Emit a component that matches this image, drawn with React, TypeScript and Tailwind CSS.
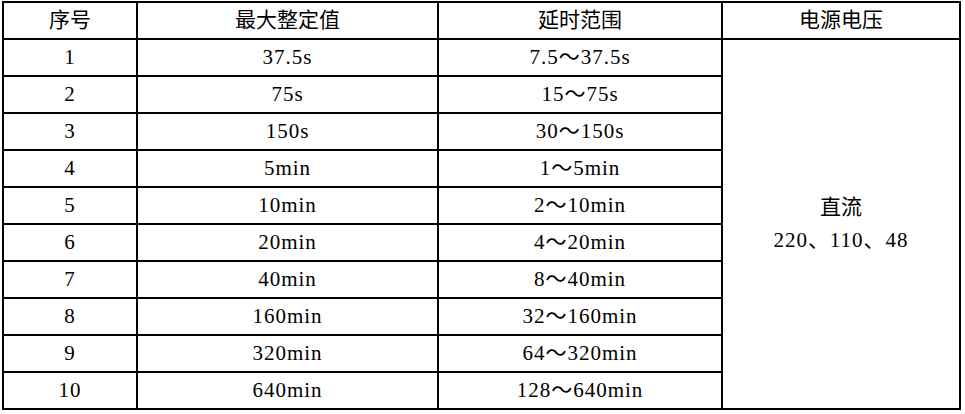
import React from 'react'

const rows = [
  { no: '1', max: '37.5s', range: '7.5～37.5s' },
  { no: '2', max: '75s', range: '15～75s' },
  { no: '3', max: '150s', range: '30～150s' },
  { no: '4', max: '5min', range: '1～5min' },
  { no: '5', max: '10min', range: '2～10min' },
  { no: '6', max: '20min', range: '4～20min' },
  { no: '7', max: '40min', range: '8～40min' },
  { no: '8', max: '160min', range: '32～160min' },
  { no: '9', max: '320min', range: '64～320min' },
  { no: '10', max: '640min', range: '128～640min' },
]

const cell = 'border-2 border-black text-center align-middle p-0 font-normal'
const num = cell + ' tracking-[1px]'

export default function App() {
  return (
    <div className="w-[965px] h-[414px] bg-white pt-[1px] pl-[2px]">
      <table
        className="table-fixed border-collapse w-[957px] text-[21px] leading-none text-black"
        style={{ fontFamily: '"Liberation Serif", "Noto Sans CJK SC", serif' }}
      >
        <colgroup>
          <col className="w-[134px]" />
          <col className="w-[301px]" />
          <col className="w-[284px]" />
          <col className="w-[238px]" />
        </colgroup>
        <thead>
          <tr className="h-[37px]">
            <th className={cell}>序号</th>
            <th className={cell}>最大整定值</th>
            <th className={cell}>延时范围</th>
            <th className={cell}>电源电压</th>
          </tr>
        </thead>
        <tbody>
          {rows.map((r, i) => (
            <tr key={r.no} className="h-[37px]">
              <td className={num}>{r.no}</td>
              <td className={num}>{r.max}</td>
              <td className={num}>{r.range}</td>
              {i === 0 && (
                <td className={cell} rowSpan={rows.length}>
                  <div className="flex flex-col items-center gap-[12px]">
                    <span>直流</span>
                    <span className="tracking-[1px]">220、110、48</span>
                  </div>
                </td>
              )}
            </tr>
          ))}
        </tbody>
      </table>
    </div>
  )
}
